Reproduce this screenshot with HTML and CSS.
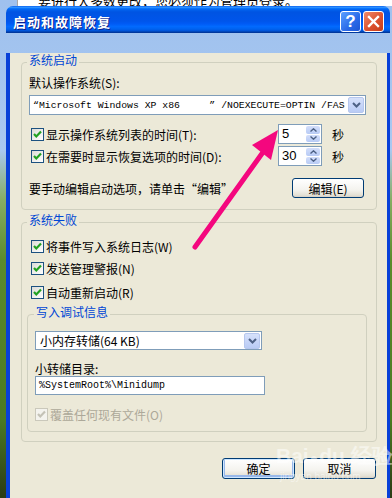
FILE: index.html
```html
<!DOCTYPE html>
<html>
<head lang="zh-CN">
    <meta charset="UTF-8">
    <title>启动和故障恢复</title>
    <link rel="stylesheet" href="styles.css">
</head>
<body>
    <div class="behind">要进行大多数更改，您必须作为管理员登录。</div>
    <div class="window">
        <div class="titlebar">
            <span class="title">启动和故障恢复</span>
            <span class="tbtn help">?</span>
            <span class="tbtn close">
                <svg width="13" height="13" viewBox="0 0 13 13"><path d="M2 2 L11 11 M11 2 L2 11" stroke="#fff" stroke-width="2.4" stroke-linecap="square"/></svg>
            </span>
        </div>
        <div class="client">
            <fieldset class="group g1">
                <legend>系统启动</legend>
                <div class="label">默认操作系统(S):</div>
                <div class="combo c-os">
                    <span class="combo-text mono os-text">“Microsoft Windows XP x86&nbsp;&nbsp;&nbsp;&nbsp;&nbsp;” /NOEXECUTE=OPTIN /FAS</span>
                    <span class="drop"><svg width="9" height="6" viewBox="0 0 9 6"><path d="M1 1 L4.5 4.5 L8 1" fill="none" stroke="#4d6185" stroke-width="2"/></svg></span>
                </div>
                <div class="row timer t1">
                    <span class="cb"><span class="check"><svg width="11" height="11" viewBox="0 0 11 11"><path d="M2 5 L4.3 7.5 L9 2.5" fill="none" stroke="#21a121" stroke-width="2.2"/></svg></span>显示操作系统列表的时间(T):</span>
                    <span class="spin"><span class="spin-val">5</span><span class="spin-btns"><span class="sb"><svg width="7" height="4" viewBox="0 0 7 4"><path d="M0.5 3.5 L3.5 0.8 L6.5 3.5" fill="none" stroke="#4d6185" stroke-width="1.4"/></svg></span><span class="sb"><svg width="7" height="4" viewBox="0 0 7 4"><path d="M0.5 0.5 L3.5 3.2 L6.5 0.5" fill="none" stroke="#4d6185" stroke-width="1.4"/></svg></span></span></span>
                    <span class="sec">秒</span>
                </div>
                <div class="row timer t2">
                    <span class="cb"><span class="check"><svg width="11" height="11" viewBox="0 0 11 11"><path d="M2 5 L4.3 7.5 L9 2.5" fill="none" stroke="#21a121" stroke-width="2.2"/></svg></span>在需要时显示恢复选项的时间(D):</span>
                    <span class="spin"><span class="spin-val">30</span><span class="spin-btns"><span class="sb"><svg width="7" height="4" viewBox="0 0 7 4"><path d="M0.5 3.5 L3.5 0.8 L6.5 3.5" fill="none" stroke="#4d6185" stroke-width="1.4"/></svg></span><span class="sb"><svg width="7" height="4" viewBox="0 0 7 4"><path d="M0.5 0.5 L3.5 3.2 L6.5 0.5" fill="none" stroke="#4d6185" stroke-width="1.4"/></svg></span></span></span>
                    <span class="sec">秒</span>
                </div>
                <div class="row edit-row">
                    <span>要手动编辑启动选项，请单击“编辑”</span>
                    <span class="btn btn-edit">编辑(E)</span>
                </div>
            </fieldset>

            <fieldset class="group g2">
                <legend>系统失败</legend>
                <div class="row cbrow r-w">
                    <span class="cb"><span class="check"><svg width="11" height="11" viewBox="0 0 11 11"><path d="M2 5 L4.3 7.5 L9 2.5" fill="none" stroke="#21a121" stroke-width="2.2"/></svg></span>将事件写入系统日志(W)</span>
                </div>
                <div class="row cbrow r-n">
                    <span class="cb"><span class="check"><svg width="11" height="11" viewBox="0 0 11 11"><path d="M2 5 L4.3 7.5 L9 2.5" fill="none" stroke="#21a121" stroke-width="2.2"/></svg></span>发送管理警报(N)</span>
                </div>
                <div class="row cbrow r-r">
                    <span class="cb"><span class="check"><svg width="11" height="11" viewBox="0 0 11 11"><path d="M2 5 L4.3 7.5 L9 2.5" fill="none" stroke="#21a121" stroke-width="2.2"/></svg></span>自动重新启动(R)</span>
                </div>

                <fieldset class="group g3">
                    <legend>写入调试信息</legend>
                    <div class="combo c-dump">
                        <span class="combo-text">小内存转储(64 KB)</span>
                        <span class="drop"><svg width="9" height="6" viewBox="0 0 9 6"><path d="M1 1 L4.5 4.5 L8 1" fill="none" stroke="#4d6185" stroke-width="2"/></svg></span>
                    </div>
                    <div class="label small-label">小转储目录:</div>
                    <div class="textbox mono">%SystemRoot%\Minidump</div>
                    <div class="row cbrow disabled">
                        <span class="cb"><span class="check"><svg width="11" height="11" viewBox="0 0 11 11"><path d="M2 5 L4.3 7.5 L9 2.5" fill="none" stroke="#c4c2b6" stroke-width="2.2"/></svg></span>覆盖任何现有文件(O)</span>
                    </div>
                </fieldset>
            </fieldset>

            <div class="buttons">
                <span class="btn btn-default">确定</span>
                <span class="btn">取消</span>
            </div>
        </div>
    </div>

    <!-- 粉色标注箭头 -->
    <svg class="arrow" width="392" height="498" viewBox="0 0 392 498">
        <line x1="195" y1="247" x2="266" y2="148" stroke="#f4077e" stroke-width="5" stroke-linecap="round"/>
        <polygon points="278,130 252,145 271,160" fill="#f4077e"/>
    </svg>

    <div class="watermark">
        <div class="wm-main">Bai<span class="paw">●</span>du 经验</div>
        <div class="wm-sub">jingyan.baidu.com</div>
    </div>
</body>
</html>
```

FILE: styles.css
```css
*{
    margin: 0;
    padding: 0;
    box-sizing: border-box;
}
body{
    width: 392px;
    height: 498px;
    overflow: hidden;
    position: relative;
    font-family: "Noto Sans CJK SC", "Liberation Sans", sans-serif;
    font-size: 12px;
    color: #000;
    background: linear-gradient(#9fc1ee 0, #a9c8f0 150px, #86ad62 200px, #5b8b2c 260px, #4b7a22 420px, #2c3d16 495px);
}
.mono{
    font-family: "Liberation Mono", "Noto Sans CJK SC", monospace;
    font-size: 10px;
}
.behind{
    height: 6px;
    margin-left: 17px;
    padding-left: 20px;
    background: #fff;
    border-left: 1px solid #a7a7a7;
    overflow: hidden;
    font-size: 13px;
    line-height: 2px;
    white-space: nowrap;
}

/* 窗口 */
.window{
    margin-left: 6px;
    width: 384px;
}
.titlebar{
    height: 27px;
    display: flex;
    align-items: flex-start;
    padding: 5px 6px 0 7px;
    border-radius: 7px 7px 0 0;
    background: linear-gradient(#0058ee 0%, #3593ff 4%, #288eff 6%, #127dff 8%, #036ffc 10%, #0262ee 14%, #0057e5 20%, #0054e3 24%, #0055eb 56%, #005bf5 66%, #026afe 76%, #0062ef 86%, #0052d6 92%, #0040ab 96%, #003092 100%);
}
.title{
    flex: 1;
    margin-top: 4px;
    color: #fff;
    font-weight: bold;
    font-size: 13px;
    line-height: 14px;
    letter-spacing: 1px;
    text-shadow: 1px 1px 0 #0a1e8a;
}
.tbtn{
    width: 21px;
    height: 21px;
    margin-left: 2px;
    border: 1px solid #fff;
    border-radius: 3px;
    display: flex;
    align-items: center;
    justify-content: center;
}
.help{
    background: linear-gradient(135deg, #5aa0ff, #2a6ae8 60%, #1c55d4);
    color: #fff;
    font-family: "Liberation Sans", sans-serif;
    font-weight: bold;
    font-size: 17px;
    line-height: 1;
}
.close{
    background: linear-gradient(135deg, #f08a6a, #dc5230 55%, #c63c1a);
}
.client{
    height: 460px;
    padding: 0 10px 0 11px;
    background: #ece9d8;
    border-style: solid;
    border-color: #0840d8;
    border-width: 0 3px 5px 4px;
}

/* 分组框 */
.group{
    border: 1px solid #d0d0bf;
    border-radius: 4px;
    min-width: 0;
}
.group legend{
    color: #0046d5;
    line-height: 14px;
    padding: 0 2px 4px;
}
.g1{
    margin-top: 20px;
    padding: 4px 9px 11px 7px;
}
.g1 legend{
    margin-left: -2px;
}
.g2{
    margin-top: 3px;
    padding: 5px 9px 9px 5px;
}
.g3{
    margin-top: 3px;
    padding: 8px 0 7px 7px;
}
.g3 legend{
    margin-left: -1px;
}
.label{
    line-height: 16px;
}
.small-label{
    margin-top: 13px;
    line-height: 12px;
}

/* 下拉框 */
.combo{
    height: 20px;
    display: flex;
    align-items: center;
    background: #fff;
    border: 1px solid #7f9db9;
}
.combo-text{
    flex: 1;
    padding-left: 4px;
    white-space: nowrap;
    overflow: hidden;
}
.os-text{
    font-size: 9.8px;
    padding-left: 3px;
}
.drop{
    width: 16px;
    height: 16px;
    margin-right: 1px;
    border: 1px solid #b6c7ee;
    border-radius: 2px;
    background: linear-gradient(#d6e1fb, #b9cbf5);
    display: flex;
    align-items: center;
    justify-content: center;
}
.c-os{
    margin-top: 4px;
    margin-right: 1px;
}
.c-dump{
    width: 227px;
    height: 19px;
}
.textbox{
    width: 230px;
    height: 19px;
    margin-top: 1px;
    padding-left: 3px;
    line-height: 17px;
    background: #fff;
    border: 1px solid #7f9db9;
}

/* 行 */
.row{
    height: 20px;
    display: flex;
    align-items: center;
}
.cb{
    display: flex;
    align-items: center;
    white-space: nowrap;
}
.check{
    width: 13px;
    height: 13px;
    margin-right: 2px;
    border: 1px solid #1c5180;
    background: linear-gradient(135deg, #dcdcd7, #fff);
    display: flex;
    align-items: center;
    justify-content: center;
}
.timer{
    display: grid;
    grid-template-columns: 1fr 44px 45px;
    align-items: center;
}
.timer .cb{
    margin-left: 2px;
}
.t1{
    margin-top: 9px;
}
.t2{
    margin-top: 2px;
}
.sec{
    padding-left: 10px;
}
.spin{
    height: 20px;
    display: flex;
    background: #fff;
    border: 1px solid #7f9db9;
}
.spin-val{
    flex: 1;
    padding-left: 3px;
    font-family: "Liberation Sans", sans-serif;
    font-size: 13px;
    line-height: 18px;
}
.spin-btns{
    width: 14px;
    margin: 1px;
    display: flex;
    flex-direction: column;
    gap: 1px;
}
.sb{
    flex: 1;
    border-radius: 2px;
    background: linear-gradient(#d3defa, #b8cbf5);
    display: flex;
    align-items: center;
    justify-content: center;
}
.edit-row{
    margin-top: 12px;
    justify-content: space-between;
    padding-right: 3px;
}
.cbrow .cb{
    margin-left: 4px;
}
.r-n{
    margin-top: 2px;
}
.r-r{
    margin-top: 4px;
}
.g3 .cbrow .cb{
    margin-left: 0;
}
.disabled{
    margin-top: 9px;
    color: #aca899;
}
.disabled .check{
    border-color: #cac8bb;
    background: #f4f3ee;
}

/* 按钮 */
.btn{
    height: 21px;
    width: 73px;
    display: flex;
    align-items: center;
    justify-content: center;
    border: 1px solid #003c74;
    border-radius: 3px;
    background: linear-gradient(#fff, #f4f3ee 60%, #e3e0d4 90%, #d6d0c5);
}
.btn-edit{
    width: 72px;
    height: 20px;
}
.btn-default{
    box-shadow: inset 0 0 0 1px #cee7ff, inset 0 -1px 0 2px #98b8ea;
}
.buttons{
    margin-top: 16px;
    margin-right: 1px;
    display: flex;
    justify-content: flex-end;
    gap: 8px;
}

/* 覆盖层 */
.arrow{
    position: absolute;
    left: 0;
    top: 0;
    pointer-events: none;
}
.watermark{
    position: absolute;
    left: 276px;
    top: 443px;
    color: rgba(255, 255, 255, 0.5);
    font-family: "Liberation Sans", sans-serif;
    pointer-events: none;
}
.wm-main{
    font-size: 21px;
    font-weight: bold;
    line-height: 26px;
    white-space: nowrap;
}
.paw{
    font-size: 14px;
    margin: 0 1px;
}
.wm-sub{
    font-size: 10px;
    margin-left: 4px;
    line-height: 12px;
}
```
